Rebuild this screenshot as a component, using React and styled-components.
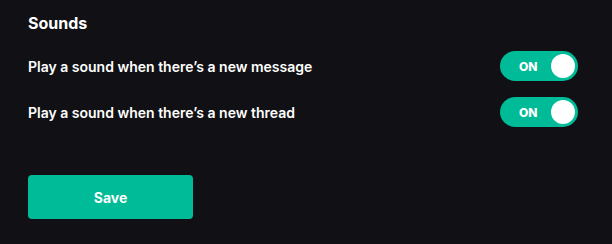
import React, { useState } from 'react';
import styled, { createGlobalStyle } from 'styled-components';

const Global = createGlobalStyle`
  html, body {
    margin: 0;
    padding: 0;
    background: #111115;
  }
  body {
    font-family: Inter, "Noto Sans", sans-serif;
    color: #ffffff;
  }
`

const Panel = styled.div`
  width: 612px;
  height: 244px;
  box-sizing: border-box;
  padding: 12px 34px 0 28px;
  background: #111115;
`
const Title = styled.h3`
  margin: 0;
  font-size: 16px;
  font-weight: 700;
  line-height: 22px;
`
const List = styled.div`
  display: flex;
  flex-direction: column;
  gap: 16px;
  margin-top: 17px;
`
const Row = styled.div`
  display: flex;
  align-items: center;
  justify-content: space-between;
  height: 30px;
`
const Label = styled.span`
  font-size: 14px;
  font-weight: 600;
`
const Toggle = styled.button`
  position: relative;
  width: 78px;
  height: 30px;
  border: none;
  border-radius: 15px;
  padding: 0 0 0 19px;
  background: ${p => (p.$on ? '#00bb98' : '#3a3a42')};
  color: #ffffff;
  font-family: Inter, sans-serif;
  font-size: 12px;
  font-weight: 800;
  text-align: left;
  cursor: pointer;
`
const Knob = styled.span`
  position: absolute;
  top: 3px;
  left: ${p => (p.$on ? '51px' : '3px')};
  width: 24px;
  height: 24px;
  border-radius: 50%;
  background: #ffffff;
`
const Save = styled.button`
  margin-top: 48px;
  width: 165px;
  height: 44px;
  border: none;
  border-radius: 4px;
  background: #00bb98;
  color: #ffffff;
  font-family: Inter, sans-serif;
  font-size: 14px;
  font-weight: 700;
  cursor: pointer;
`

const Switch = ({ on, onClick }) => (
  <Toggle $on={on} onClick={onClick}>
    {on ? 'ON' : ''}
    <Knob $on={on} />
  </Toggle>
)

const App = () => {
  const [msg, setMsg] = useState(true)
  const [thread, setThread] = useState(true)
  return (
    <Panel>
      <Global />
      <Title>Sounds</Title>
      <List>
        <Row>
          <Label>Play a sound when there’s a new message</Label>
          <Switch on={msg} onClick={() => setMsg(!msg)} />
        </Row>
        <Row>
          <Label>Play a sound when there’s a new thread</Label>
          <Switch on={thread} onClick={() => setThread(!thread)} />
        </Row>
      </List>
      <Save>Save</Save>
    </Panel>
  )
}

export default App
